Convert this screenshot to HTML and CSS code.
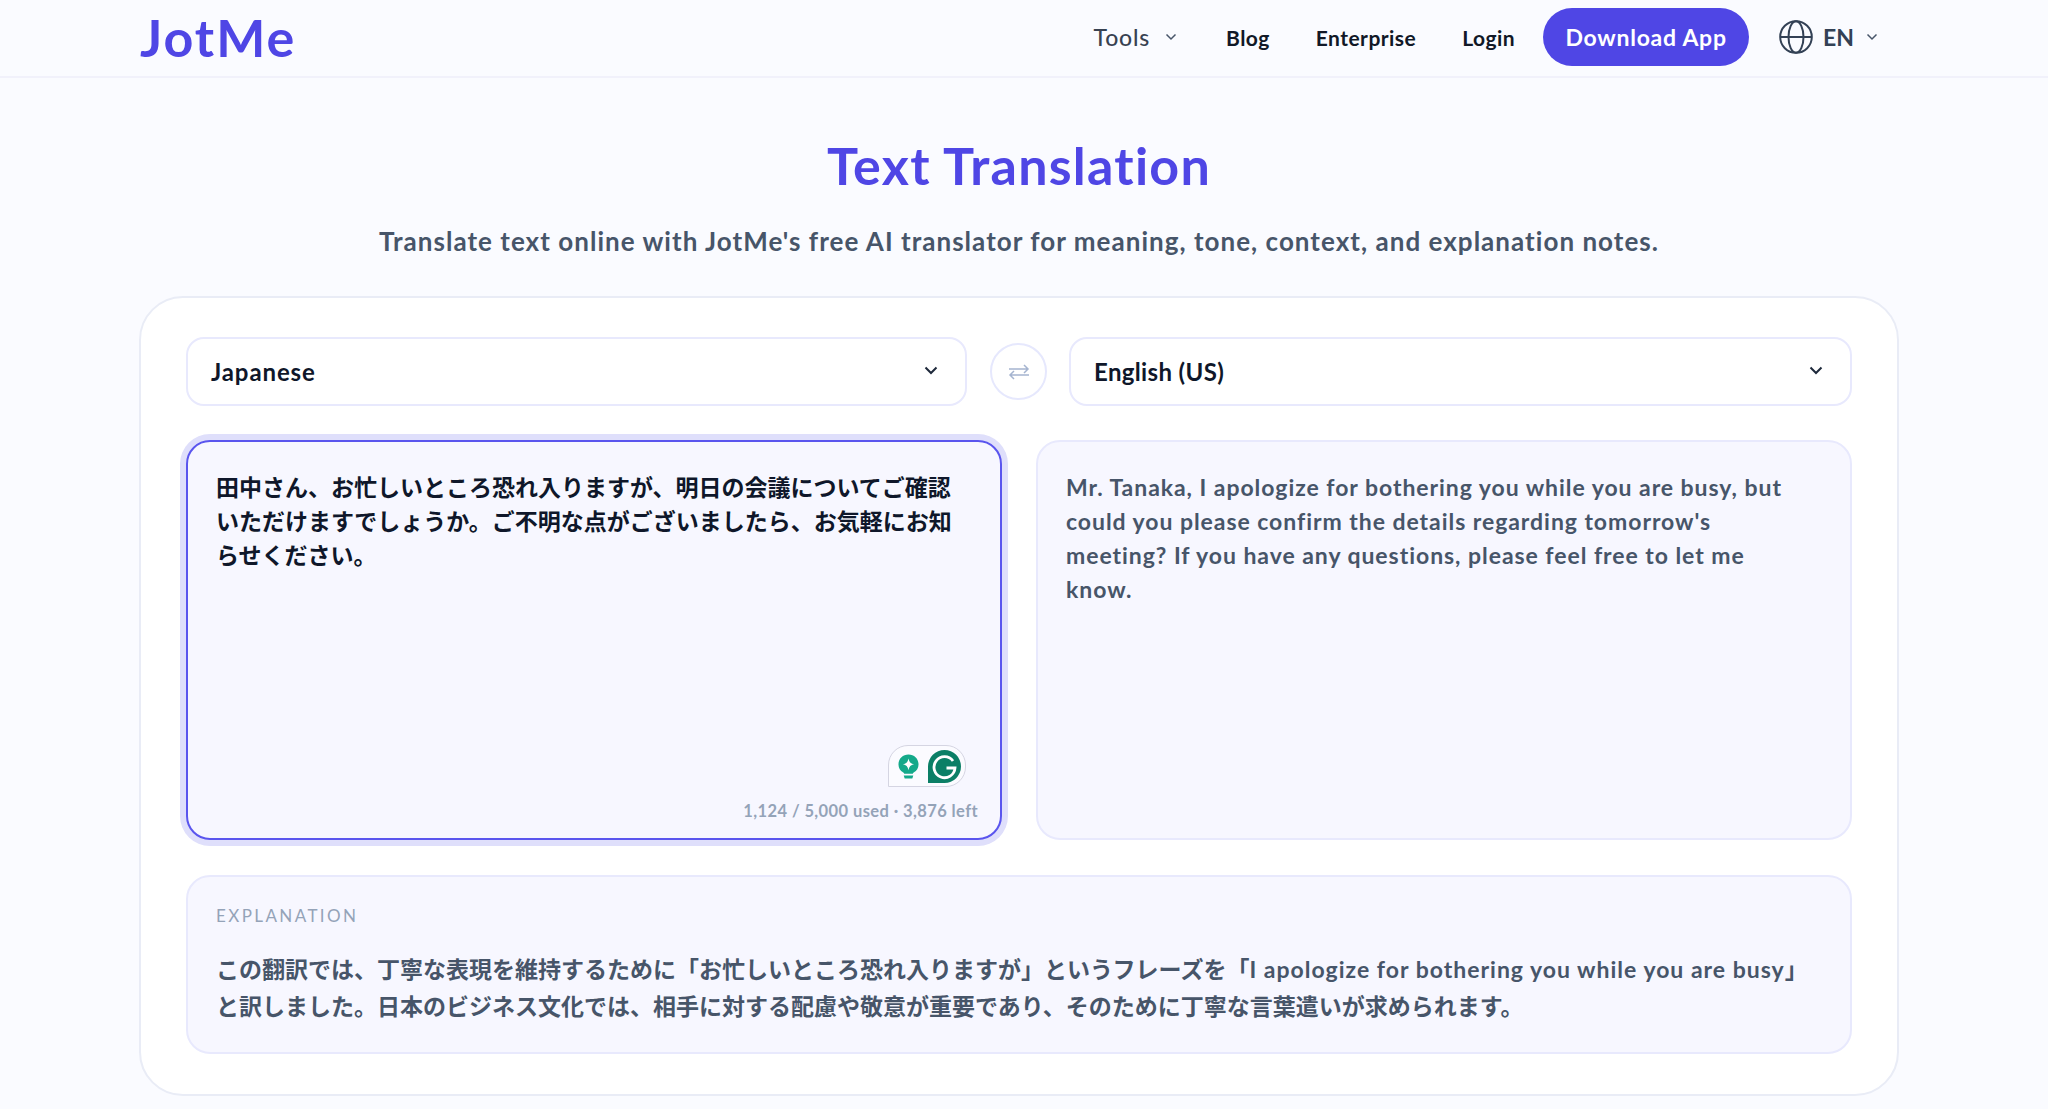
FILE: index.html
```html
<!DOCTYPE html>
<html lang="en">
<head>
<meta charset="utf-8">
<title>Text Translation - JotMe</title>
<link rel="stylesheet" href="styles.css">
</head>
<body>
<header class="topbar">
  <a class="logo">JotMe</a>
  <nav class="nav">
    <a class="nav-item nav-tools">Tools
      <svg class="chev-sm" viewBox="0 0 12 8"><path d="M1.500 1.500 6 6l4.500-4.500"/></svg>
    </a>
    <a class="nav-item">Blog</a>
    <a class="nav-item">Enterprise</a>
    <a class="nav-item">Login</a>
    <a class="cta">Download App</a>
    <a class="lang">
      <svg class="globe" viewBox="0 0 34 34"><circle cx="17" cy="17" r="15.800"/><ellipse cx="17" cy="17" rx="7.500" ry="15.800"/><path d="M1.200 17h31.600"/></svg>
      <span>EN</span>
      <svg class="chev-sm" viewBox="0 0 12 8"><path d="M1.500 1.500 6 6l4.500-4.500"/></svg>
    </a>
  </nav>
</header>

<main class="page">
  <h1 class="title">Text Translation</h1>
  <p class="subtitle">Translate text online with JotMe's free AI translator for meaning, tone, context, and explanation notes.</p>

  <section class="card">
    <div class="selectors">
      <div class="select select-from"><span>Japanese</span>
        <svg class="chev" viewBox="0 0 14 9"><path d="M1.500 1.500 7 7l5.500-5.500"/></svg>
      </div>
      <button class="swap" aria-label="Swap languages">
        <svg viewBox="0 0 22 16"><path d="M1 5h19M16 1l4 4-4 4" /><path d="M21 11H2M6 7l-4 4 4 4"/></svg>
      </button>
      <div class="select select-to"><span>English (US)</span>
        <svg class="chev" viewBox="0 0 14 9"><path d="M1.500 1.500 7 7l5.500-5.500"/></svg>
      </div>
    </div>

    <div class="panes">
      <div class="pane pane-source">
        <p class="source-text">田中さん、お忙しいところ恐れ入りますが、明日の会議についてご確認いただけますでしょうか。ご不明な点がございましたら、お気軽にお知らせください。</p>
        <div class="counter">1,124 / 5,000 used · 3,876 left</div>
        <div class="grammarly">
          <svg class="bulb" viewBox="0 0 22 26"><path fill="#14a98a" d="M11 .5C5 .5.500 5 .500 10.800c0 3.800 2 6.600 4.700 8.200.9.500 1.300 1 1.300 1.500h9c0-.5.400-1 1.300-1.500 2.700-1.600 4.700-4.400 4.700-8.200C21.500 5 17 .5 11 .5z"/><path fill="#14a98a" d="M6 22.500h10l-1 3H7z"/><path fill="#fff" d="M11 4.500c.7 3.800 2.300 5.500 6 6.200-3.700.7-5.300 2.400-6 6.200-.7-3.800-2.300-5.500-6-6.200 3.700-.7 5.300-2.400 6-6.200z"/></svg>
          <svg class="gmark" viewBox="0 0 33 33"><path fill="#0b7f66" d="M16.500 0a16.500 16.500 0 0 1 0 33H0V16.500A16.500 16.500 0 0 1 16.500 0z"/><path fill="none" stroke="#fff" stroke-width="2.800" d="M25 11A10.500 10.500 0 1 0 27 18H18.500"/></svg>
        </div>
      </div>
      <div class="pane pane-target">
        <p class="target-text">Mr. Tanaka, I apologize for bothering you while you are busy, but<br>could you please confirm the details regarding tomorrow's<br>meeting? If you have any questions, please feel free to let me<br>know.</p>
      </div>
    </div>

    <div class="explain">
      <div class="explain-label">EXPLANATION</div>
      <p class="explain-text">この翻訳では、丁寧な表現を維持するために「お忙しいところ恐れ入りますが」というフレーズを「<span class="latin">I apologize for bothering you while you are busy」</span>と訳しました。日本のビジネス文化では、相手に対する配慮や敬意が重要であり、そのために丁寧な言葉遣いが求められます。</p>
    </div>
  </section>
</main>
</body>
</html>
```

FILE: styles.css
```css
* { box-sizing: border-box; }
html, body { margin: 0; padding: 0; }
body {
  height: 1109px;
  overflow: hidden;
  background: #fafbff;
  color: #0f172a;
  font-family: "Lato", "Noto Sans CJK JP", sans-serif;
}
p, h1 { margin: 0; }

.topbar {
  height: 78px;
  padding: 0 140px;
  border-bottom: 2px solid #f1f1fb;
  display: flex;
  align-items: center;
  justify-content: space-between;
}
.logo {
  font-size: 52px;
  font-weight: 700;
  color: #4f46e5;
  letter-spacing: 2px;
  line-height: 1;
  margin-top: -2px;
}
.nav { display: flex; align-items: center; margin-right: 30px; margin-top: -2px; }
.nav-item {
  font-size: 21px;
  font-weight: 700;
  color: #111827;
  margin-right: 46px;
  letter-spacing: 0.45px;
}
.nav-tools {
  display: flex;
  align-items: center;
  gap: 15px;
  margin-right: 49px;
  font-size: 23px;
  color: #374151;
  font-weight: 500;
  letter-spacing: 0.8px;
}
.chev-sm { width: 12px; height: 8px; fill: none; stroke: #475569; stroke-width: 1.500; }
.cta {
  height: 58px;
  width: 206px;
  margin-left: -18px;
  border-radius: 29px;
  background: #4f46e5;
  color: #fff;
  font-size: 23px;
  font-weight: 700;
  letter-spacing: 0.75px;
  display: flex;
  align-items: center;
  justify-content: center;
}
.lang {
  display: flex;
  align-items: center;
  margin-left: 30px;
  color: #334155;
  font-size: 23px;
  font-weight: 700;
}
.lang span { margin: 0 12px 0 10px; }
.globe { width: 34px; height: 34px; fill: none; stroke: #334155; stroke-width: 2; }

.page { padding: 0 149px 0 139px; }
.title {
  margin-top: 62px;
  text-align: center;
  font-size: 52px;
  line-height: 50px;
  font-weight: 700;
  letter-spacing: 1.25px;
  color: #4f46e5;
}
.subtitle {
  margin-top: 33px;
  text-align: center;
  font-size: 26px;
  line-height: 36px;
  font-weight: 700;
  letter-spacing: 1.03px;
  color: #475569;
}

.card {
  margin-top: 37px;
  height: 800px;
  width: 1760px;
  padding: 39px 45px 0;
  background: #fff;
  border: 2px solid #e9ecf6;
  border-radius: 44px;
}
.selectors { display: flex; align-items: center; gap: 24px; }
.select {
  height: 69px;
  padding: 0 27px 0 23px;
  background: #fff;
  border: 2px solid #e8e9fd;
  border-radius: 18px;
  display: flex;
  align-items: center;
  justify-content: space-between;
  font-size: 24px;
  font-weight: 700;
  letter-spacing: 0.9px;
  color: #0f172a;
}
.select-from { flex: none; width: 781px; }
.select-to { flex: 1; letter-spacing: 0.35px; }
.chev { width: 14px; height: 9px; fill: none; stroke: #1e293b; stroke-width: 2; margin-top: -3px; }
.swap {
  flex: none;
  width: 57px;
  height: 57px;
  padding: 0;
  margin: 0 -2px 0 -1px;
  border: 2px solid #e6e8fd;
  border-radius: 50%;
  background: #fff;
  display: flex;
  align-items: center;
  justify-content: center;
}
.swap svg { width: 22px; height: 16px; fill: none; stroke: #a5b4d0; stroke-width: 1.500; }

.panes { margin-top: 34px; display: flex; gap: 34px; height: 400px; }
.pane {
  flex: 1;
  position: relative;
  padding: 28px 28px 0;
  border: 2px solid #e8e9fd;
  border-radius: 24px;
  background: #f7f7ff;
  display: flex;
  flex-direction: column;
}
.pane-source {
  border-color: #5a55ee;
  box-shadow: 0 0 0 6px #dfdffb;
  padding-bottom: 17px;
}
.source-text {
  font-size: 23px;
  line-height: 34px;
  font-weight: 700;
  color: #0f172a;
}
.target-text {
  font-size: 23px;
  line-height: 34px;
  font-weight: 700;
  letter-spacing: 0.95px;
  color: #475569;
}
.counter {
  margin-top: auto;
  text-align: right;
  font-size: 16.500px;
  font-weight: 700;
  color: #94a3b8;
  letter-spacing: 0.4px;
  margin-right: -6px;
}
.grammarly {
  position: absolute;
  right: 34px;
  bottom: 51px;
  width: 78px;
  height: 42px;
  padding: 0 4px 0 9px;
  display: flex;
  align-items: center;
  justify-content: space-between;
  background: #fbfbff;
  border: 1.500px solid #d5d5e2;
  border-radius: 20px 20px 20px 0;
}
.bulb { width: 21px; height: 25px; }
.gmark { width: 33px; height: 33px; }

.explain {
  margin-top: 35px;
  height: 179px;
  padding: 29px 28px 0;
  background: #f7f7ff;
  border: 2px solid #e8e9fd;
  border-radius: 24px;
}
.explain-label {
  font-size: 17px;
  line-height: 20px;
  font-weight: 400;
  letter-spacing: 2.400px;
  color: #94a3b8;
}
.explain-text {
  margin-top: 25px;
  font-size: 23px;
  line-height: 37px;
  font-weight: 700;
  color: #475569;
}
.latin { letter-spacing: 1px; }
```
